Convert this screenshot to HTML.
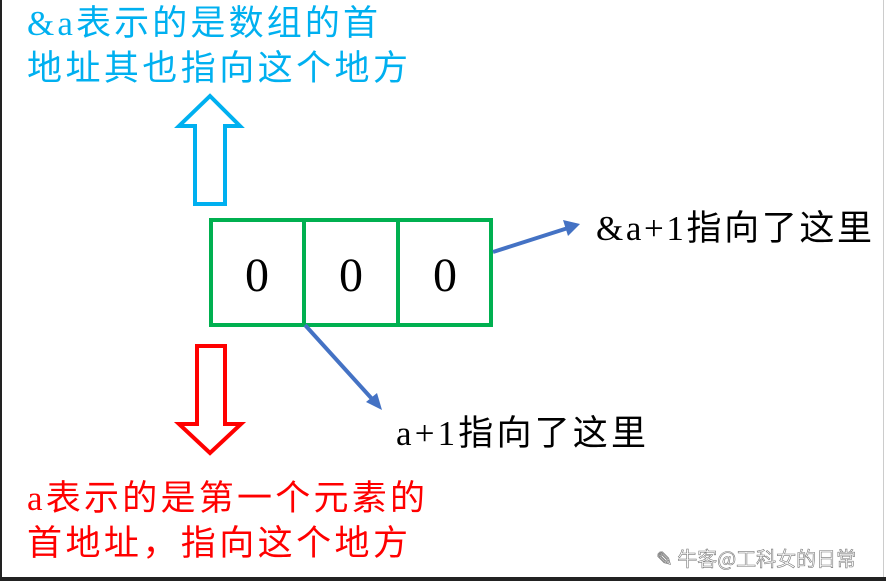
<!DOCTYPE html>
<html><head><meta charset="utf-8"><style>
html,body{margin:0;padding:0;background:#fff;}
svg{display:block}
</style></head><body>
<svg width="886" height="581" viewBox="0 0 886 581" xmlns="http://www.w3.org/2000/svg">
<rect x="0" y="0" width="886" height="581" fill="#fff"/>
<rect x="0" y="0" width="2" height="581" fill="#222"/>
<rect x="0" y="577" width="886" height="4" fill="#222"/>
<rect x="883" y="0" width="1" height="577" fill="#ccc"/>
<g font-family="'Liberation Serif','Noto Sans CJK SC',serif" font-size="35">
<text x="27" y="35" fill="#00b0f0" textLength="351" lengthAdjust="spacing">&amp;a<tspan font-family="'Noto Sans CJK SC',sans-serif">表示的是数组的首</tspan></text>
<text x="27" y="80" fill="#00b0f0" font-family="'Noto Sans CJK SC',sans-serif" textLength="381" lengthAdjust="spacing">地址其也指向这个地方</text>
<text x="27" y="510" fill="#ff0000" textLength="398" lengthAdjust="spacing">a<tspan font-family="'Noto Sans CJK SC',sans-serif">表示的是第一个元素的</tspan></text>
<text x="27" y="555" fill="#ff0000" font-family="'Noto Sans CJK SC',sans-serif" textLength="381" lengthAdjust="spacing">首地址，指向这个地方</text>
<text x="596" y="240" fill="#000" textLength="276" lengthAdjust="spacing">&amp;a+1<tspan font-family="'Noto Sans CJK SC',sans-serif">指向了这里</tspan></text>
<text x="396" y="445" fill="#000" textLength="250" lengthAdjust="spacing">a+1<tspan font-family="'Noto Sans CJK SC',sans-serif">指向了这里</tspan></text>
</g>
<polygon points="210,96 240,126 225,126 225,204 195,204 195,126 179,126" fill="none" stroke="#00b0f0" stroke-width="4"/>
<polygon points="197,346 225,346 225,424 241,424 210,453 179,424 197,424" fill="none" stroke="#ff0000" stroke-width="4"/>
<rect x="211" y="220" width="280" height="105" fill="none" stroke="#00b050" stroke-width="4"/>
<line x1="304" y1="220" x2="304" y2="325" stroke="#00b050" stroke-width="4"/>
<line x1="398" y1="220" x2="398" y2="325" stroke="#00b050" stroke-width="4"/>
<g font-family="'Liberation Serif',serif" font-size="48" text-anchor="middle" fill="#000">
<text x="257" y="291">0</text><text x="351" y="291">0</text><text x="445" y="291">0</text>
</g>
<line x1="493" y1="252" x2="568" y2="228" stroke="#4472c4" stroke-width="4"/>
<polygon points="580,224 563,220 568,236" fill="#4472c4"/>
<line x1="305" y1="325" x2="373" y2="400" stroke="#4472c4" stroke-width="4"/>
<polygon points="382,410 366,402 377,393" fill="#4472c4"/>
<text x="656" y="566" font-family="'Noto Sans CJK SC',sans-serif" font-size="20" fill="#fff" stroke="#777" stroke-width="0.6">✎ 牛客@工科女的日常</text>
</svg>
</body></html>
